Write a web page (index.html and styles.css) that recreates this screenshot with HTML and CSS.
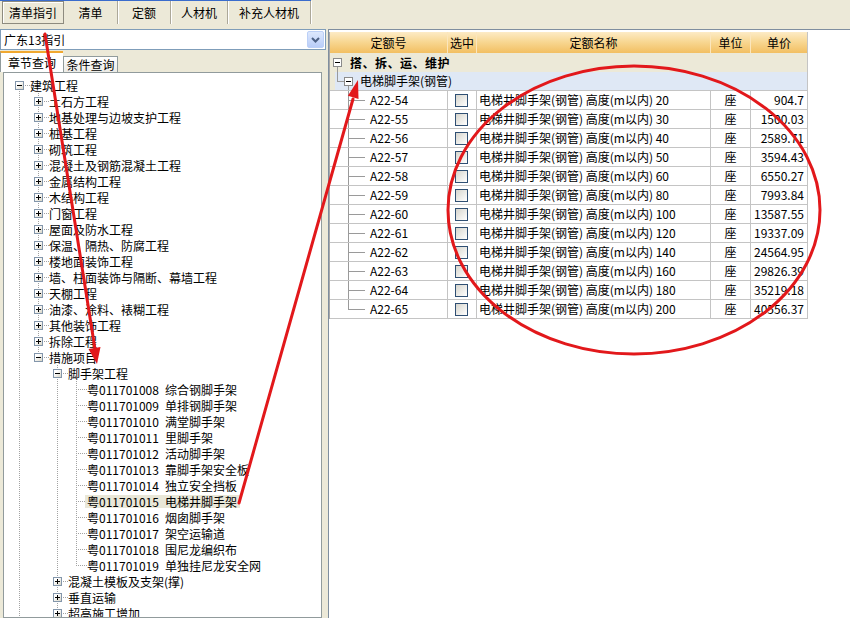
FILE: index.html
```html
<!DOCTYPE html>
<html lang="zh-CN">
<head>
<meta charset="utf-8">
<title>清单指引</title>
<link rel="stylesheet" href="styles.css">
</head>
<body>
<div class="app">
  <div class="tabstrip">
    <div class="tabs">
      <div class="tab active w1">清单指引</div>
      <div class="tab w2">清单</div>
      <div class="tab w3">定额</div>
      <div class="tab w4">人材机</div>
      <div class="tab w5">补充人材机</div>
    </div>
  </div>
  <div class="main">
    <div class="left">
      <div class="combo">
        <span class="combo-text">广东13指引</span>
        <span class="combo-btn"><svg width="15" height="15" viewBox="0 0 15 15"><path d="M4 6 L7.5 9.5 L11 6" fill="none" stroke="#4d6185" stroke-width="2"/></svg></span>
      </div>
      <div class="qtabs">
        <div class="qtab active">章节查询</div>
        <div class="qtab">条件查询</div>
      </div>
      <div class="treepanel">
        <ul class="tree">
          <li class="lv0">
            <div class="row"><span class="box minus"></span><span class="lbl">建筑工程</span></div>
            <ul>
              <li class="lv1"><div class="row"><span class="box plus"></span><span class="lbl">土石方工程</span></div></li>
              <li class="lv1"><div class="row"><span class="box plus"></span><span class="lbl">地基处理与边坡支护工程</span></div></li>
              <li class="lv1"><div class="row"><span class="box plus"></span><span class="lbl">桩基工程</span></div></li>
              <li class="lv1"><div class="row"><span class="box plus"></span><span class="lbl">砌筑工程</span></div></li>
              <li class="lv1"><div class="row"><span class="box plus"></span><span class="lbl">混凝土及钢筋混凝土工程</span></div></li>
              <li class="lv1"><div class="row"><span class="box plus"></span><span class="lbl">金属结构工程</span></div></li>
              <li class="lv1"><div class="row"><span class="box plus"></span><span class="lbl">木结构工程</span></div></li>
              <li class="lv1"><div class="row"><span class="box plus"></span><span class="lbl">门窗工程</span></div></li>
              <li class="lv1"><div class="row"><span class="box plus"></span><span class="lbl">屋面及防水工程</span></div></li>
              <li class="lv1"><div class="row"><span class="box plus"></span><span class="lbl">保温、隔热、防腐工程</span></div></li>
              <li class="lv1"><div class="row"><span class="box plus"></span><span class="lbl">楼地面装饰工程</span></div></li>
              <li class="lv1"><div class="row"><span class="box plus"></span><span class="lbl">墙、柱面装饰与隔断、幕墙工程</span></div></li>
              <li class="lv1"><div class="row"><span class="box plus"></span><span class="lbl">天棚工程</span></div></li>
              <li class="lv1"><div class="row"><span class="box plus"></span><span class="lbl">油漆、涂料、裱糊工程</span></div></li>
              <li class="lv1"><div class="row"><span class="box plus"></span><span class="lbl">其他装饰工程</span></div></li>
              <li class="lv1"><div class="row"><span class="box plus"></span><span class="lbl">拆除工程</span></div></li>
              <li class="lv1 last">
                <div class="row"><span class="box minus"></span><span class="lbl">措施项目</span></div>
                <ul>
                  <li class="lv2">
                    <div class="row"><span class="box minus"></span><span class="lbl">脚手架工程</span></div>
                    <ul>
                      <li class="lv3"><div class="row"><span class="stub"></span><span class="lbl"><span class="code">粤011701008</span>综合钢脚手架</span></div></li>
                      <li class="lv3"><div class="row"><span class="stub"></span><span class="lbl"><span class="code">粤011701009</span>单排钢脚手架</span></div></li>
                      <li class="lv3"><div class="row"><span class="stub"></span><span class="lbl"><span class="code">粤011701010</span>满堂脚手架</span></div></li>
                      <li class="lv3"><div class="row"><span class="stub"></span><span class="lbl"><span class="code">粤011701011</span>里脚手架</span></div></li>
                      <li class="lv3"><div class="row"><span class="stub"></span><span class="lbl"><span class="code">粤011701012</span>活动脚手架</span></div></li>
                      <li class="lv3"><div class="row"><span class="stub"></span><span class="lbl"><span class="code">粤011701013</span>靠脚手架安全板</span></div></li>
                      <li class="lv3"><div class="row"><span class="stub"></span><span class="lbl"><span class="code">粤011701014</span>独立安全挡板</span></div></li>
                      <li class="lv3"><div class="row"><span class="stub"></span><span class="lbl selected"><span class="code">粤011701015</span>电梯井脚手架</span></div></li>
                      <li class="lv3"><div class="row"><span class="stub"></span><span class="lbl"><span class="code">粤011701016</span>烟囱脚手架</span></div></li>
                      <li class="lv3"><div class="row"><span class="stub"></span><span class="lbl"><span class="code">粤011701017</span>架空运输道</span></div></li>
                      <li class="lv3"><div class="row"><span class="stub"></span><span class="lbl"><span class="code">粤011701018</span>围尼龙编织布</span></div></li>
                      <li class="lv3 last"><div class="row"><span class="stub"></span><span class="lbl"><span class="code">粤011701019</span>单独挂尼龙安全网</span></div></li>
                    </ul>
                  </li>
                  <li class="lv2"><div class="row"><span class="box plus"></span><span class="lbl">混凝土模板及支架(撑)</span></div></li>
                  <li class="lv2"><div class="row"><span class="box plus"></span><span class="lbl">垂直运输</span></div></li>
                  <li class="lv2"><div class="row"><span class="box plus"></span><span class="lbl">超高施工增加</span></div></li>
                </ul>
              </li>
            </ul>
          </li>
        </ul>
      </div>
    </div>
    <div class="splitter"></div>
    <div class="right">
      <div class="grid">
        <div class="gr head">
          <div class="hc">定额号</div>
          <div class="hc">选中</div>
          <div class="hc">定额名称</div>
          <div class="hc">单位</div>
          <div class="hc">单价</div>
        </div>
        <div class="grp grp1"><span class="tbox"></span><b class="gtitle">搭、拆、运、维护</b></div>
        <div class="grp grp2"><span class="tbox"></span><span class="gtitle2">电梯脚手架(钢管)</span></div>

        <div class="gr data"><div class="c-code">A22-54</div><div class="c-chk"><span class="chk"></span></div><div class="c-name">电梯井脚手架(钢管) 高度(m以内) 20</div><div class="c-unit">座</div><div class="c-price">904.7</div></div>
        <div class="gr data"><div class="c-code">A22-55</div><div class="c-chk"><span class="chk"></span></div><div class="c-name">电梯井脚手架(钢管) 高度(m以内) 30</div><div class="c-unit">座</div><div class="c-price">1500.03</div></div>
        <div class="gr data"><div class="c-code">A22-56</div><div class="c-chk"><span class="chk"></span></div><div class="c-name">电梯井脚手架(钢管) 高度(m以内) 40</div><div class="c-unit">座</div><div class="c-price">2589.71</div></div>
        <div class="gr data"><div class="c-code">A22-57</div><div class="c-chk"><span class="chk"></span></div><div class="c-name">电梯井脚手架(钢管) 高度(m以内) 50</div><div class="c-unit">座</div><div class="c-price">3594.43</div></div>
        <div class="gr data"><div class="c-code">A22-58</div><div class="c-chk"><span class="chk"></span></div><div class="c-name">电梯井脚手架(钢管) 高度(m以内) 60</div><div class="c-unit">座</div><div class="c-price">6550.27</div></div>
        <div class="gr data"><div class="c-code">A22-59</div><div class="c-chk"><span class="chk"></span></div><div class="c-name">电梯井脚手架(钢管) 高度(m以内) 80</div><div class="c-unit">座</div><div class="c-price">7993.84</div></div>
        <div class="gr data"><div class="c-code">A22-60</div><div class="c-chk"><span class="chk"></span></div><div class="c-name">电梯井脚手架(钢管) 高度(m以内) 100</div><div class="c-unit">座</div><div class="c-price">13587.55</div></div>
        <div class="gr data"><div class="c-code">A22-61</div><div class="c-chk"><span class="chk"></span></div><div class="c-name">电梯井脚手架(钢管) 高度(m以内) 120</div><div class="c-unit">座</div><div class="c-price">19337.09</div></div>
        <div class="gr data"><div class="c-code">A22-62</div><div class="c-chk"><span class="chk"></span></div><div class="c-name">电梯井脚手架(钢管) 高度(m以内) 140</div><div class="c-unit">座</div><div class="c-price">24564.95</div></div>
        <div class="gr data"><div class="c-code">A22-63</div><div class="c-chk"><span class="chk"></span></div><div class="c-name">电梯井脚手架(钢管) 高度(m以内) 160</div><div class="c-unit">座</div><div class="c-price">29826.39</div></div>
        <div class="gr data"><div class="c-code">A22-64</div><div class="c-chk"><span class="chk"></span></div><div class="c-name">电梯井脚手架(钢管) 高度(m以内) 180</div><div class="c-unit">座</div><div class="c-price">35219.18</div></div>
        <div class="gr data last"><div class="c-code">A22-65</div><div class="c-chk"><span class="chk"></span></div><div class="c-name">电梯井脚手架(钢管) 高度(m以内) 200</div><div class="c-unit">座</div><div class="c-price">40556.37</div></div>
      </div>
    </div>
  </div>
  <svg class="annot" width="850" height="618" viewBox="0 0 850 618">
    <g fill="none" stroke="#e2181b" stroke-width="3" stroke-linecap="round">
      <line x1="45" y1="34" x2="95" y2="349"/>
      <line x1="239" y1="503" x2="353" y2="99"/>
      <ellipse cx="634" cy="210" rx="186" ry="144"/>
    </g>
    <polygon fill="#e2181b" points="97,364 100.5,347 88.5,349"/>
    <polygon fill="#e2181b" points="358,80 358.5,99 347.9,95.8"/>
  </svg>
</div>
</body>
</html>
```

FILE: styles.css
```css
* { box-sizing: border-box; }
html, body { margin: 0; padding: 0; }
body {
  width: 850px;
  height: 618px;
  overflow: hidden;
  background: #ece9d8;
  font-family: "Noto Sans CJK SC", "Liberation Sans", sans-serif;
  font-size: 12px;
  line-height: 16px;
  color: #000;
}
.app {
  position: relative;
  width: 850px;
  height: 618px;
  display: flex;
  flex-direction: column;
}

/* top tabs */
.tabstrip { height: 25px; display: flex; }
.tabs {
  display: flex;
  height: 25px;
  padding-left: 2px;
  border-top: 1px solid #3a6ccc;
}
.tab {
  height: 23px;
  display: flex;
  align-items: center;
  justify-content: center;
  border-right: 1px solid #aca899;
  box-shadow: 1px 0 0 #fff;
}
.tab.active {
  border: 1px solid #8d8b7f;
  box-shadow: inset 1px 1px 0 #fff;
}
.w1 { width: 62px; }
.w2 { width: 54px; }
.w3 { width: 53px; }
.w4 { width: 57px; }
.w5 { width: 83px; }

.main { flex: 1; display: flex; min-height: 0; }

/* left */
.left {
  width: 326px;
  flex: none;
  display: flex;
  flex-direction: column;
  padding-top: 4px;
}
.combo {
  height: 21px;
  width: 326px;
  border: 1px solid #7f9db9;
  background: #fff;
  display: flex;
  align-items: center;
}
.combo-text { padding-left: 3px; }
.combo-btn {
  margin-left: auto;
  margin-right: 1px;
  width: 17px;
  height: 17px;
  border: 1px solid #bcd0f7;
  border-radius: 2px;
  background: linear-gradient(#dde8fd, #b9cdf8);
  display: flex;
  align-items: center;
  justify-content: center;
}
.qtabs {
  display: flex;
  align-items: flex-end;
  height: 21px;
  margin-top: 1px;
}
.qtab {
  height: 16px;
  width: 55px;
  border: 1px solid #919b9c;
  border-bottom: none;
  background: linear-gradient(#fff, #ecebe6);
  display: flex;
  align-items: center;
  justify-content: center;
}
.qtab.active {
  width: 63px;
  height: 21px;
  background: #fff;
  border-top: 2px solid #f0a830;
  border-right: none;
}
.treepanel {
  flex: 1;
  min-height: 0;
  margin-left: 3px;
  width: 319px;
  border: 1px solid #919b9c;
  background: #fff;
  padding-top: 4px;
  overflow: hidden;
}

/* tree */
.tree, .tree ul { list-style: none; margin: 0; padding: 0; }
.tree li {
  background-image: repeating-linear-gradient(to bottom, #a3a3a3 0 1px, transparent 1px 2px);
  background-repeat: no-repeat;
  background-size: 1px 100%;
}
.tree li.lv0 { background-position: 15px 12px; }
.tree li.lv1 { background-position: 34px 0; }
.tree li.lv2 { background-position: 53px 0; }
.tree li.lv3 { background-position: 72px 0; }
.tree li.last { background-size: 1px 8px; }
.row {
  height: 16px;
  display: flex;
  align-items: center;
  white-space: nowrap;
  background-image: repeating-linear-gradient(to right, #a3a3a3 0 1px, transparent 1px 2px);
  background-repeat: no-repeat;
  background-size: 11px 1px;
}
.lv0 > .row { padding-left: 11px; background-position: 15px 8px; }
.lv1 > .row { padding-left: 30px; background-position: 34px 8px; }
.lv2 > .row { padding-left: 49px; background-position: 53px 8px; }
.lv3 > .row { padding-left: 68px; background-position: 72px 8px; }
.box {
  flex: none;
  width: 9px;
  height: 9px;
  margin-right: 6px;
  border: 1px solid #8396ab;
}
.box.minus {
  background:
    linear-gradient(#000, #000) center / 5px 1px no-repeat,
    linear-gradient(135deg, #fff 30%, #d8d5c6);
}
.box.plus {
  background:
    linear-gradient(#000, #000) center / 5px 1px no-repeat,
    linear-gradient(#000, #000) center / 1px 5px no-repeat,
    linear-gradient(135deg, #fff 30%, #d8d5c6);
}
.stub { flex: none; width: 9px; margin-right: 6px; }
.lbl {
  padding: 0 2px;
  margin-left: -2px;
  line-height: 13px;
  display: inline-flex;
}
.lbl.selected { background: #e9e7d8; padding-right: 3px; }
.code { width: 78px; flex: none; }

/* splitter */
.splitter { width: 2px; flex: none; }

/* right grid */
.right {
  flex: 1;
  margin-top: 4px;
  border-left: 1px solid #7f8e9f;
  border-top: 1px solid #7f8e9f;
  background: #fff;
  padding-top: 2px;
}
.grid {
  width: 479px;
  border-left: 1px solid #a8a8a8;
}
.gr {
  display: grid;
  grid-template-columns: 118px 29px 234px 40px 57px;
}
.head {
  height: 21px;
  background: linear-gradient(#fdebc6, #f8d894 45%, #f2bf62);
}
.hc {
  display: flex;
  align-items: center;
  justify-content: center;
  border-right: 1px solid #fbe6bd;
}
.hc:last-child { border-right-color: #c4c4c4; }
.grp {
  height: 19px;
  display: flex;
  align-items: center;
  border-right: 1px solid #c4c4c4;
  background-repeat: no-repeat;
}
.tbox {
  flex: none;
  width: 9px;
  height: 9px;
  border: 1px solid #8a8a8a;
  background:
    linear-gradient(#000, #000) center / 5px 1px no-repeat,
    #fff;
}
.grp1 {
  padding-left: 3px;
  background-color: #ece9d8;
  background-image: linear-gradient(#9a9a9a, #9a9a9a);
  background-size: 1px 5px;
  background-position: 7px 14px;
}
.grp1 .tbox { margin-right: 8px; }
.gtitle { font-weight: bold; letter-spacing: 0.5px; }
.grp2 {
  padding-left: 14px;
  border-bottom: 1px solid #c4c4c4;
  background-image:
    linear-gradient(#9a9a9a, #9a9a9a),
    linear-gradient(#9a9a9a, #9a9a9a),
    linear-gradient(#9a9a9a, #9a9a9a),
    linear-gradient(to right, #ece9d8 5px, #dfe8f5 5px);
  background-size: 1px 9px, 7px 1px, 1px 5px, 100% 100%;
  background-position: 7px 0, 7px 9px, 18px 13px, 0 0;
}
.grp2 .tbox { margin-right: 7px; }
.data { height: 19px; }
.data > div {
  border-right: 1px solid #c4c4c4;
  border-bottom: 1px solid #c4c4c4;
  display: flex;
  align-items: center;
  white-space: nowrap;
}
.c-code {
  padding-left: 40px;
  background-image: linear-gradient(#9a9a9a, #9a9a9a), linear-gradient(#9a9a9a, #9a9a9a);
  background-repeat: no-repeat;
  background-size: 1px 100%, 17px 1px;
  background-position: 18px 0, 18px 9px;
}
.data.last .c-code { background-size: 1px 10px, 17px 1px; }
.c-chk { padding-left: 7px; }
.chk {
  width: 13px;
  height: 13px;
  border: 1px solid #2f4f73;
  background: linear-gradient(135deg, #d6d5cd, #fff);
}
.c-name { padding-left: 2px; }
.c-unit { justify-content: center; }
.c-price { justify-content: flex-end; padding-right: 3px; }

/* annotations overlay */
.annot {
  position: absolute;
  left: 0;
  top: 0;
  pointer-events: none;
}
```
